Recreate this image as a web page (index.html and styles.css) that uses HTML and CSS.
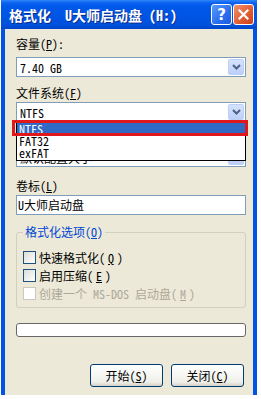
FILE: index.html
```html
<!DOCTYPE html>
<html lang="zh-CN">
<head>
    <meta charset="UTF-8">
    <title>格式化 U大师启动盘 (H:)</title>
    <link rel="stylesheet" href="styles.css">
</head>
<body>
    <div class="window">
        <div class="titlebar">
            <span class="title">格式化&nbsp;&nbsp;U大师启动盘 (H:)</span>
            <div class="tb-buttons">
                <span class="tb-btn help">?</span>
                <span class="tb-btn close">
                    <svg width="11" height="11" viewBox="0 0 11 11"><path d="M1.5 1.5 L9.5 9.5 M9.5 1.5 L1.5 9.5" stroke="#fff" stroke-width="2.2" stroke-linecap="square"/></svg>
                </span>
            </div>
        </div>

        <div class="client">
            <div class="label">容量(<u>P</u>):</div>
            <div class="combo first">
                <span class="combo-text">7.40 GB</span>
                <span class="drop-btn"><svg width="9" height="6" viewBox="0 0 9 6"><path d="M1 1 L4.5 4.5 L8 1" fill="none" stroke="#4d6185" stroke-width="2"/></svg></span>
            </div>

            <div class="label gap">文件系统(<u>F</u>)</div>
            <div class="combo-wrap">
                <div class="combo">
                    <span class="combo-text">NTFS</span>
                    <span class="drop-btn"><svg width="9" height="6" viewBox="0 0 9 6"><path d="M1 1 L4.5 4.5 L8 1" fill="none" stroke="#4d6185" stroke-width="2"/></svg></span>
                </div>
                <!-- lista aberta por cima do campo seguinte -->
                <ul class="drop-list">
                    <li class="selected">NTFS</li>
                    <li>FAT32</li>
                    <li>exFAT</li>
                </ul>
                <div class="mark"></div>
            </div>

            <div class="label gap covered">分配单元大小(<u>A</u>)</div>
            <div class="combo">
                <span class="combo-text">默认配置大小</span>
                <span class="drop-btn"><svg width="9" height="6" viewBox="0 0 9 6"><path d="M1 1 L4.5 4.5 L8 1" fill="none" stroke="#4d6185" stroke-width="2"/></svg></span>
            </div>

            <div class="label gap-lg">卷标(<u>L</u>)</div>
            <div class="textbox">U大师启动盘</div>

            <fieldset class="group">
                <legend>格式化选项(<u>O</u>)</legend>
                <div class="check-row"><span class="check"></span>快速格式化(<u>Q</u>)</div>
                <div class="check-row"><span class="check"></span>启用压缩(<u>E</u>)</div>
                <div class="check-row disabled"><span class="check"></span>创建一个 MS-DOS 启动盘(<u>M</u>)</div>
            </fieldset>

            <div class="progress"></div>

            <div class="actions">
                <button type="button">开始(<u>S</u>)</button>
                <button type="button">关闭(<u>C</u>)</button>
            </div>
        </div>
    </div>
</body>
</html>
```

FILE: styles.css
```css
body {
    margin: 0;
    background: #fff;
    font-family: "Noto Sans Mono CJK SC", "Noto Sans CJK SC", sans-serif;
    font-size: 12px;
    color: #000;
}
.window {
    width: 256px;
    margin-left: 1px;
    background: #0053e3;
}
.titlebar {
    height: 29px;
    box-sizing: border-box;
    display: flex;
    align-items: center;
    justify-content: space-between;
    padding: 0 3px 0 8px;
    background: linear-gradient(#2f86f9 0, #0a61f0 3px, #0058e8 7px, #0054e3 18px, #0050dc 25px, #0046c8 29px);
}
.title {
    color: #fff;
    font-weight: bold;
    font-size: 14px;
    text-shadow: 1px 1px 0 #0a2a8a;
}
.tb-buttons {
    display: flex;
    gap: 1px;
}
.tb-btn {
    width: 21px;
    height: 21px;
    box-sizing: border-box;
    border: 1px solid #fff;
    border-radius: 3px;
    display: flex;
    align-items: center;
    justify-content: center;
    color: #fff;
    font-family: "DejaVu Sans", sans-serif;
    font-weight: bold;
    font-size: 15px;
}
.help {
    background: linear-gradient(135deg, #5a9af8, #2a6ef0 60%, #1c5ae0);
}
.close {
    background: linear-gradient(135deg, #f0926e, #e05a30 60%, #c8401c);
}
.client {
    margin: 0 4px;
    height: 366px;
    box-sizing: border-box;
    background: #ece9d8;
    padding: 8px 7px 0 11px;
}
.label {
    line-height: 14px;
}
.label.gap {
    margin-top: 9px;
}
.label.gap-lg {
    margin-top: 12px;
}
.label.covered {
    visibility: hidden;
}
.combo {
    height: 20px;
    box-sizing: border-box;
    border: 1px solid #7f9db9;
    background: #fff;
    display: flex;
    align-items: center;
    justify-content: space-between;
    margin-top: 2px;
}
.combo.first {
    margin-top: 6px;
}
.combo-text {
    padding-left: 3px;
}
.drop-btn {
    width: 16px;
    height: 16px;
    margin-right: 1px;
    box-sizing: border-box;
    border: 1px solid #bccff7;
    border-radius: 2px;
    background: linear-gradient(#d6e2fc, #bdcff8);
    display: flex;
    align-items: center;
    justify-content: center;
}
.combo-wrap {
    position: relative;
}
.drop-list {
    position: absolute;
    left: 0;
    right: 0;
    top: 19px;
    margin: 0;
    padding: 1px 0;
    list-style: none;
    background: #fff;
    border: 1px solid #000;
    z-index: 2;
}
.drop-list li {
    height: 12px;
    line-height: 12px;
    padding-left: 2px;
}
.drop-list li.selected {
    background: #316ac5;
    color: #fff;
}
.mark {
    position: absolute;
    left: -4px;
    right: -2px;
    top: 18px;
    height: 16px;
    box-sizing: border-box;
    border: 3px solid #e0181c;
    z-index: 3;
}
.textbox {
    margin-top: 2px;
    height: 20px;
    box-sizing: border-box;
    border: 1px solid #7f9db9;
    background: #fff;
    line-height: 18px;
    padding-left: 1px;
}
.group {
    margin: 10px 0 0;
    padding: 9px 6px 5px;
    border: 1px solid #d0d0bf;
    border-radius: 3px;
}
.group legend {
    color: #0046d5;
    padding: 0 2px;
    line-height: 14px;
}
.check-row {
    height: 18px;
    display: flex;
    align-items: center;
    gap: 3px;
}
.check {
    width: 13px;
    height: 13px;
    box-sizing: border-box;
    border: 1px solid #1c5180;
    background: linear-gradient(135deg, #dcdcd7, #fff);
}
.check-row.disabled {
    color: #aca899;
}
.check-row.disabled .check {
    border-color: #cac8bb;
    background: #fff;
}
.progress {
    margin-top: 15px;
    height: 14px;
    box-sizing: border-box;
    border: 1px solid #686868;
    border-radius: 3px;
    background: #fff;
}
.actions {
    margin-top: 27px;
    display: flex;
    justify-content: flex-end;
    gap: 8px;
    padding-right: 2px;
}
.actions button {
    width: 73px;
    height: 23px;
    font: inherit;
    border: 1px solid #003c74;
    border-radius: 3px;
    background: linear-gradient(#fff, #f0f0ea 80%, #d6d0c5);
    padding: 0;
}
```
